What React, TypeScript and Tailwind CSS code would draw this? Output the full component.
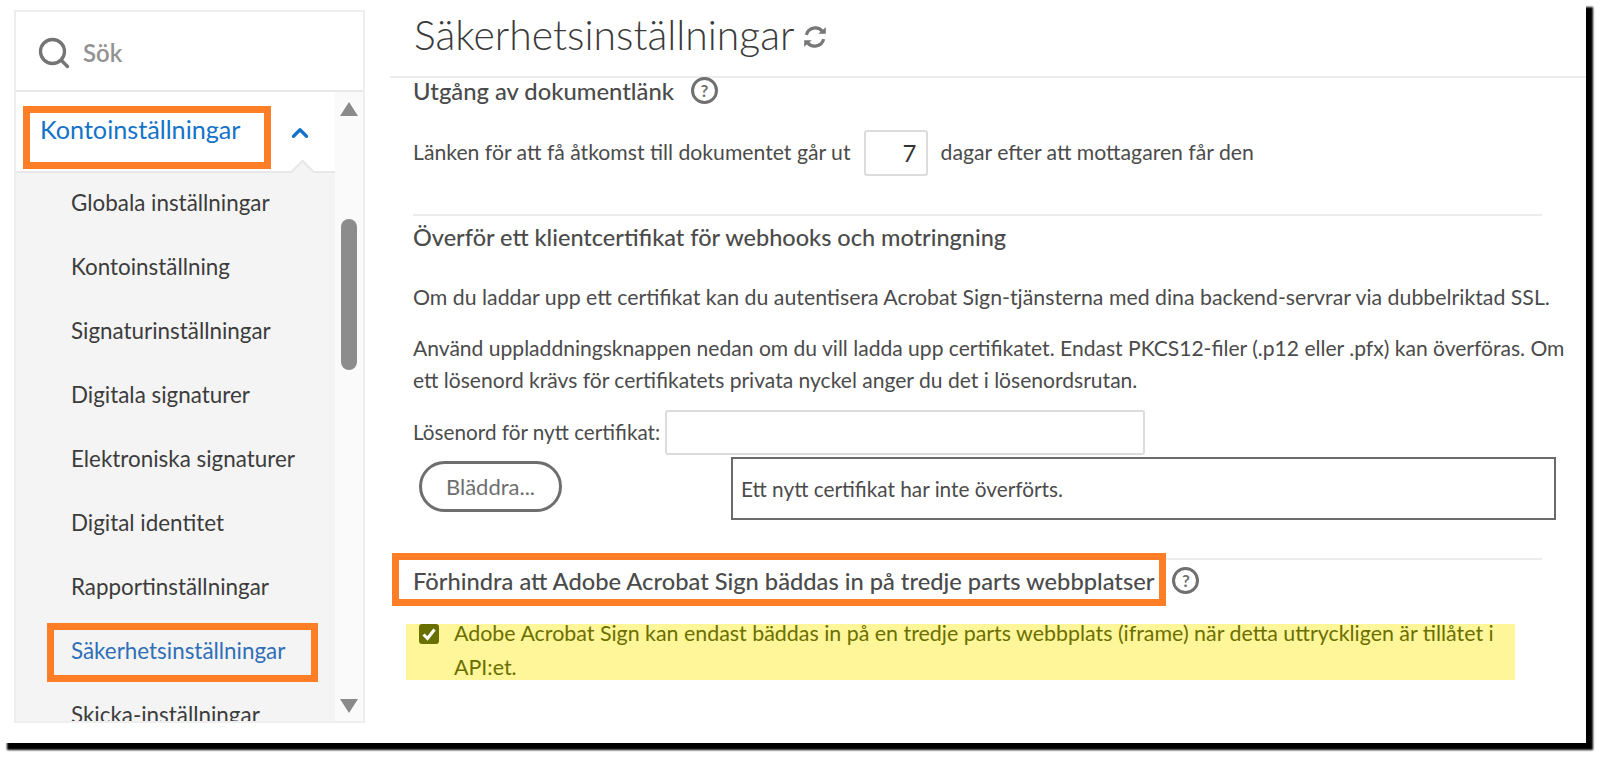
import { ChevronUp, Search } from 'lucide-react';

const menuItems = [
  'Globala inställningar',
  'Kontoinställning',
  'Signaturinställningar',
  'Digitala signaturer',
  'Elektroniska signaturer',
  'Digital identitet',
  'Rapportinställningar',
  'Säkerhetsinställningar',
  'Skicka-inställningar',
];

const HelpIcon = () => (
  <span className="flex h-[27px] w-[27px] items-center justify-center rounded-full border-[3px] border-[#707070] text-[17px] font-bold leading-none text-[#707070]">
    ?
  </span>
);

const Sidebar = () => (
  <aside className="relative mt-[10px] ml-[14px] flex h-[713px] w-[351px] shrink-0 flex-col border-2 border-[#eeeeee]">
    <div className="flex h-[80px] shrink-0 items-center gap-[11px] border-b-2 border-[#e8e8e8] pt-[3px] pl-[20px]">
      <Search className="h-[36px] w-[36px] text-[#747474]" strokeWidth={2.2} />
      <span className="text-[24px] font-semibold text-[#929292]">Sök</span>
    </div>
    <div className="flex min-h-0 flex-1">
      <nav className="relative min-h-0 w-[321px] overflow-hidden">
        <div className="flex h-[81px] items-start justify-between border-b-2 border-[#e8e8e8] pt-[21px] pl-[24px] pr-[22px]">
          <span className="text-[25.2px] leading-[32px] text-[#1473c8]">Kontoinställningar</span>
          <ChevronUp className="mt-[7px] h-[26px] w-[26px] text-[#1473c8]" strokeWidth={3} />
        </div>
        <span className="absolute top-[71px] left-[278px] h-[17px] w-[17px] rotate-45 border-t-2 border-l-2 border-[#e8e8e8] bg-[#f4f4f4]" />
        <ul className="h-full bg-[#f4f4f4]">
          {menuItems.map((item) => (
            <li
              key={item}
              className={`flex h-[64px] items-center pb-[5px] pl-[55px] text-[22.4px] ${
                item === 'Säkerhetsinställningar' ? 'text-[#2f6fb8]' : 'text-[#3c3c3c]'
              }`}
            >
              {item}
            </li>
          ))}
        </ul>
      </nav>
      <div className="flex w-[28px] flex-col items-center bg-[#fafafa] pt-[10px] pb-[8px]">
        <span className="h-0 w-0 border-x-[9px] border-b-[14px] border-x-transparent border-b-[#8a8a8a]" />
        <div className="mt-[103px] h-[151px] w-[16px] rounded-full bg-[#8c8c8c]" />
        <span className="mt-auto h-0 w-0 border-x-[9px] border-t-[14px] border-x-transparent border-t-[#8a8a8a]" />
      </div>
    </div>
    {/* annotation boxes */}
    <div className="absolute top-[94px] left-[7px] h-[63px] w-[248px] border-[7px] border-[#fd7e27]" />
    <div className="absolute top-[611px] left-[31px] h-[59px] w-[271px] border-[7px] border-[#fd7e27]" />
  </aside>
);

export default function App() {
  return (
    <div className="h-[757px] w-[1616px] overflow-hidden bg-white font-['Lato','Open_Sans',sans-serif] text-[#4b4b4b]">
      <div className="flex h-[743px] w-[1586px] shadow-[7px_7px_2px_#000]">
        <Sidebar />
        <main className="ml-[25px] min-w-0 flex-1">
          <header className="flex h-[78px] items-center gap-[8px] border-b-2 border-[#ececec] pb-[6px] pl-[24px]">
            <h1 className="text-[40.9px] font-light leading-none text-[#3a3a3a]">Säkerhetsinställningar</h1>
            <svg viewBox="0 0 24 24" className="mt-[4px] h-[26px] w-[26px]" fill="none" stroke="#777777" strokeWidth="3">
              <path d="M4 10a8.5 8.5 0 0 1 15-3" />
              <path d="M20 14a8.5 8.5 0 0 1-15 3" />
              <path d="M15 9h7V3z" fill="#777777" stroke="none" />
              <path d="M9 15H2v6z" fill="#777777" stroke="none" />
            </svg>
          </header>

          <section className="mr-[44px] ml-[23px]">
            <div className="-mt-[1px] flex items-center gap-[17px]">
              <h2 className="text-[23.8px] font-medium leading-[26px]">Utgång av dokumentlänk</h2>
              <HelpIcon />
            </div>
            <div className="mt-[26px] flex items-center text-[21.2px]">
              <span>Länken för att få åtkomst till dokumentet går ut</span>
              <span className="mx-[13px] flex h-[46px] w-[64px] items-center justify-end rounded-[3px] border-2 border-[#dcdcdc] pr-[9px] text-[24px] text-[#333]">
                7
              </span>
              <span>dagar efter att mottagaren får den</span>
            </div>
            <hr className="mt-[38px] border-t-2 border-[#ececec]" />
            <h2 className="mt-[8px] text-[23.5px] font-medium leading-[26px]">
              Överför ett klientcertifikat för webhooks och motringning
            </h2>
          </section>

          <section className="mr-[8px] ml-[23px]">
            <p className="mt-[31px] text-[21.3px] leading-[32px]">
              Om du laddar upp ett certifikat kan du autentisera Acrobat Sign-tjänsterna med dina backend-servrar via dubbelriktad SSL.
            </p>
            <p className="mt-[19px] text-[21.07px] leading-[32px]">
              Använd uppladdningsknappen nedan om du vill ladda upp certifikatet. Endast PKCS12-filer (.p12 eller .pfx) kan överföras. Om ett lösenord krävs för certifikatets privata nyckel anger du det i lösenordsrutan.
            </p>
            <div className="mt-[14px] flex items-center text-[20.7px]">
              <span>Lösenord för nytt certifikat:</span>
              <span className="ml-[5px] h-[45px] w-[480px] rounded-[3px] border-2 border-[#dcdcdc]" />
            </div>
            <div className="flex items-start">
              <button className="mt-[6px] ml-[6px] h-[51px] w-[143px] rounded-full border-[3px] border-[#6e6e6e] text-[22px] text-[#6e6e6e]">
                Bläddra...
              </button>
              <div className="mt-[2px] ml-[169px] flex h-[63px] w-[825px] items-center border-2 border-[#6a6a6a] pl-[8px] text-[20.8px]">
                Ett nytt certifikat har inte överförts.
              </div>
            </div>
          </section>

          <section className="mr-[44px] ml-[23px]">
            <hr className="mt-[38px] border-t-2 border-[#ececec]" />
            <div className="mt-[7px] flex items-center">
              <h2 className="relative text-[23.7px] font-medium leading-[26px]">
                Förhindra att Adobe Acrobat Sign bäddas in på tredje parts webbplatser
                <span className="absolute -top-[15px] -right-[12px] -bottom-[12px] -left-[21px] border-[7px] border-[#fd7e27]" />
              </h2>
              <span className="ml-[18px]">
                <HelpIcon />
              </span>
            </div>
          </section>

          <div className="mt-[30px] mr-[71px] ml-[16px] flex h-[56px] items-start gap-[15px] bg-[#fff599] pl-[13px] text-[21.4px] leading-[34px] text-[#6a7000]">
            <svg viewBox="0 0 20 20" className="h-[20px] w-[20px] shrink-0">
              <rect width="20" height="20" rx="3" fill="#6a7000" />
              <path d="M4.5 10.5l4 4 7-9" fill="none" stroke="#fff" strokeWidth="3" />
            </svg>
            <p className="-mt-[8px]">
              Adobe Acrobat Sign kan endast bäddas in på en tredje parts webbplats (iframe) när detta uttryckligen är tillåtet i API:et.
            </p>
          </div>
        </main>
      </div>
    </div>
  );
}
